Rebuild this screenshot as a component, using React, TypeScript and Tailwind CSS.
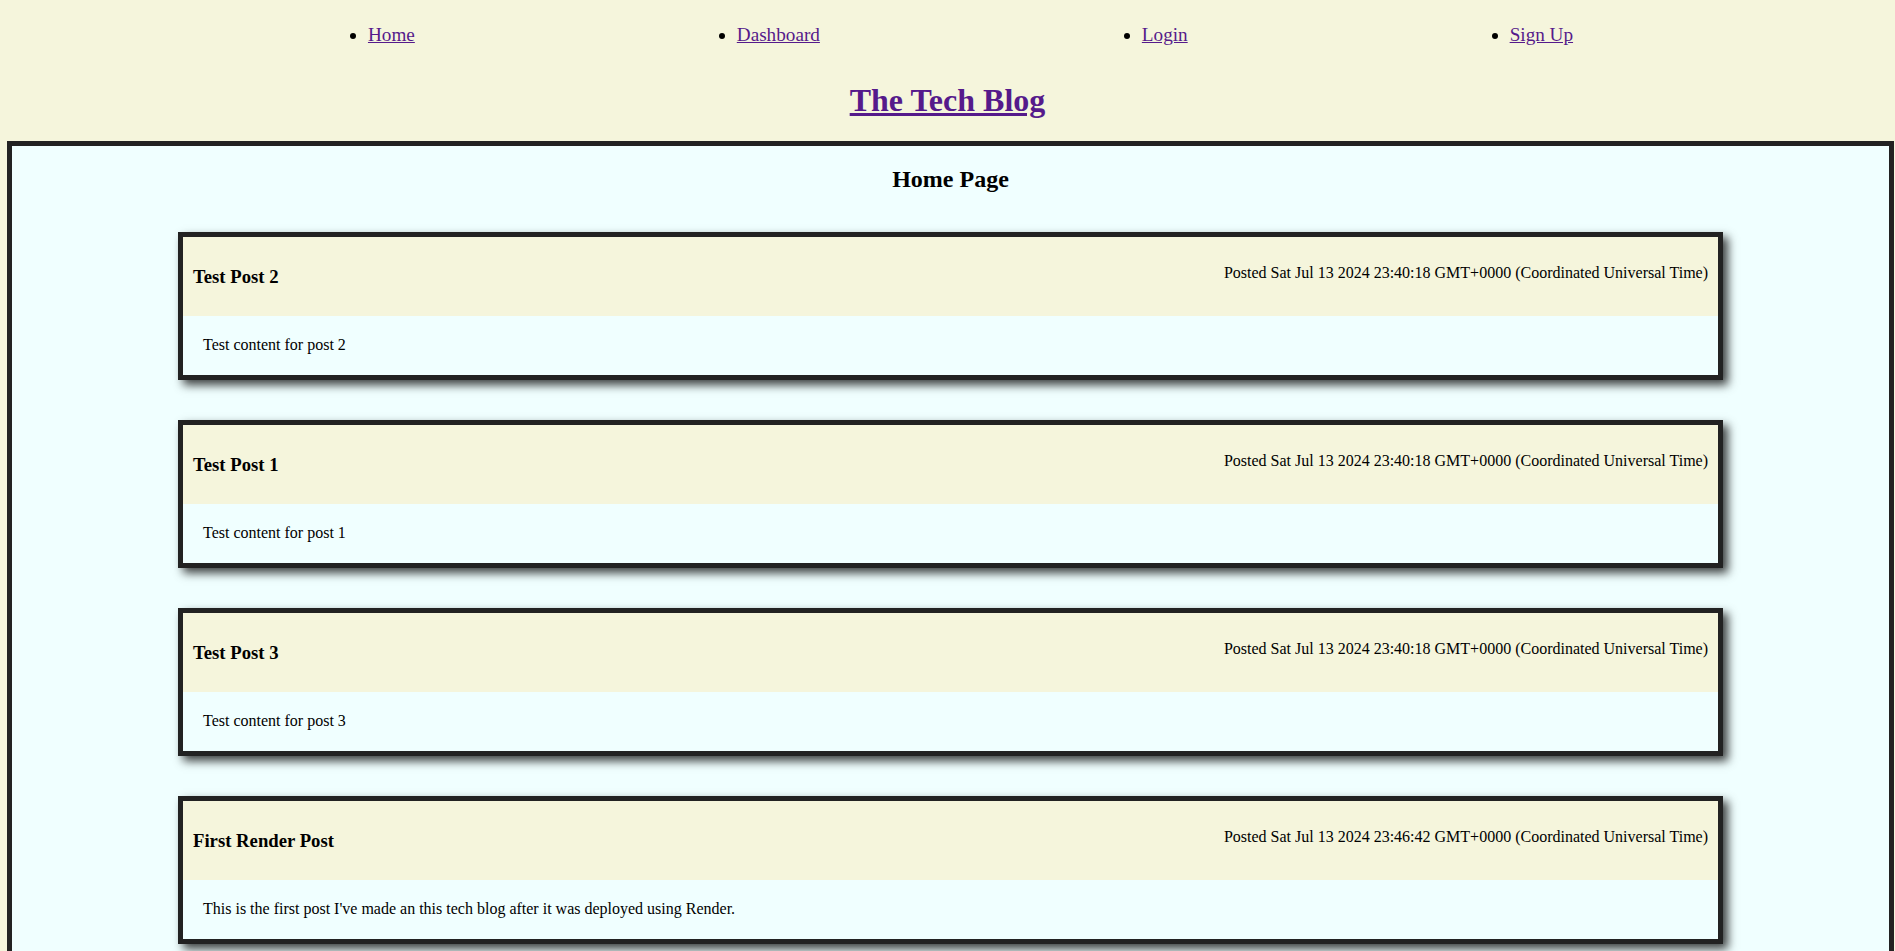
const posts = [
  {
    title: "Test Post 2",
    date: "Sat Jul 13 2024 23:40:18 GMT+0000 (Coordinated Universal Time)",
    content: "Test content for post 2",
  },
  {
    title: "Test Post 1",
    date: "Sat Jul 13 2024 23:40:18 GMT+0000 (Coordinated Universal Time)",
    content: "Test content for post 1",
  },
  {
    title: "Test Post 3",
    date: "Sat Jul 13 2024 23:40:18 GMT+0000 (Coordinated Universal Time)",
    content: "Test content for post 3",
  },
  {
    title: "First Render Post",
    date: "Sat Jul 13 2024 23:46:42 GMT+0000 (Coordinated Universal Time)",
    content: "This is the first post I've made an this tech blog after it was deployed using Render.",
  },
]

const navLinks = ["Home", "Dashboard", "Login", "Sign Up"]

function PostCard({ title, date, content }: { title: string; date: string; content: string }) {
  return (
    <article className="mx-auto w-[1545px] border-[5px] border-[#222222] shadow-[5px_5px_9px_rgba(0,0,0,0.75)]">
      <div className="flex justify-between bg-[#f5f5dc] px-[10px] py-[10px]">
        <h3 className="my-[19px] text-[18.72px] font-bold leading-[21px]">{title}</h3>
        <p className="mt-[17px] text-[16px] leading-[18px]">Posted {date}</p>
      </div>
      <div className="bg-[#f0ffff] px-5 pt-1 pb-[5px]">
        <p className="my-4 text-[16px] leading-[18px]">{content}</p>
      </div>
    </article>
  )
}

export default function App() {
  return (
    <div className="min-h-screen bg-[#f5f5dc] font-['Liberation_Serif','Times_New_Roman',serif] text-black">
      <header className="pt-6">
        <nav>
          <ul className="m-0 flex list-disc justify-evenly pl-[46px] text-[19.2px] leading-[21px]">
            {navLinks.map((l) => (
              <li key={l}>
                <a href="#" className="text-[#551a8b] underline">
                  {l}
                </a>
              </li>
            ))}
          </ul>
        </nav>
        <h1 className="mt-[37px] mb-[23px] text-center text-[32px] font-bold leading-[36px]">
          <a href="#" className="text-[#551a8b] underline">
            The Tech Blog
          </a>
        </h1>
      </header>

      <main className="ml-[7px] mr-[1px] border-[5px] border-[#222222] bg-[#f0ffff] pb-10">
        <h2 className="mt-[19px] text-center text-[24px] font-bold leading-[28px]">Home Page</h2>
        <section className="mt-[39px] flex flex-col gap-10">
          {posts.map((p) => (
            <PostCard key={p.title} {...p} />
          ))}
        </section>
      </main>
    </div>
  )
}
